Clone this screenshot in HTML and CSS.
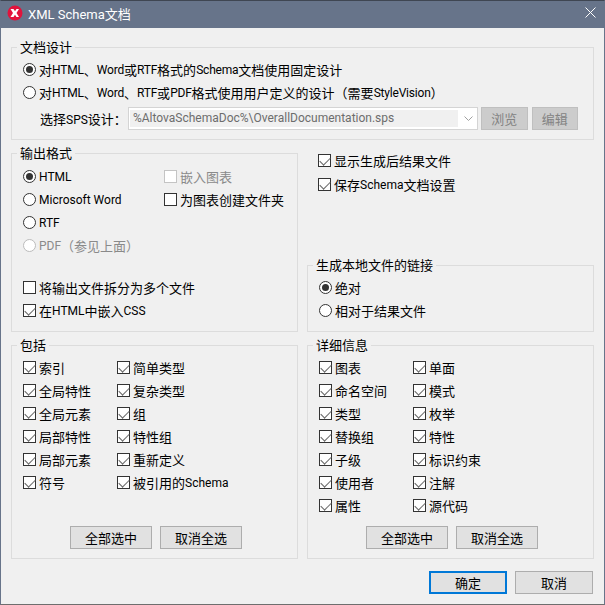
FILE: index.html
```html
<!DOCTYPE html>
<html lang="zh-CN">
<head>
  <meta charset="UTF-8" />
  <title>XML Schema文档</title>
  <link rel="stylesheet" href="styles.css">
</head>

<body>
  <div class="dialog">
    <header class="titlebar">
      <svg class="app-icon" width="16" height="16" viewBox="0 0 16 16">
        <circle cx="8" cy="8" r="7.5" fill="#e2133c"/>
        <path d="M3.500 4h3l1.500 2.200 1.500-2.200h2.500l-2.500 4 2.500 4h-2.500l-1.500-2.200-1.500 2.200h-3l2.500-4z" fill="#fff"/>
      </svg>
      <span class="title"><i>XML Schema</i>文档</span>
      <svg class="close" width="11" height="11" viewBox="0 0 11 11">
        <path d="M.5.5l10 10M10.500.5l-10 10" stroke="#fff" stroke-width="1" fill="none"/>
      </svg>
    </header>

    <main class="content">
      <fieldset class="group design">
        <legend>文档设计</legend>
        <div class="row"><span class="radio on"></span>对<i>HTML</i>、<i>Word</i>或<i>RTF</i>格式的<i>Schema</i>文档使用固定设计</div>
        <div class="row"><span class="radio"></span>对<i>HTML</i>、<i>Word</i>、<i>RTF</i>或<i>PDF</i>格式使用用户定义的设计（需要<i>StyleVision</i>）</div>
        <div class="sps">
          <label>选择<i>SPS</i>设计：</label>
          <div class="combo">
            <span class="combo-text">%AltovaSchemaDoc%\OverallDocumentation.sps</span>
            <svg width="9" height="6" viewBox="0 0 9 6"><path d="M.5.5l4 4 4-4" stroke="#a0a0a0" fill="none"/></svg>
          </div>
          <button class="btn small" disabled>浏览</button>
          <button class="btn small" disabled>编辑</button>
        </div>
      </fieldset>

      <div class="columns">
        <fieldset class="group output">
          <legend>输出格式</legend>
          <div class="format-grid">
            <div class="row"><span class="radio on"></span><i>HTML</i></div>
            <div class="row off"><span class="check"></span>嵌入图表</div>
            <div class="row"><span class="radio"></span><i>Microsoft Word</i></div>
            <div class="row"><span class="check"></span>为图表创建文件夹</div>
            <div class="row"><span class="radio"></span><i>RTF</i></div>
            <div></div>
            <div class="row off"><span class="radio"></span><i>PDF</i>（参见上面）</div>
          </div>
          <div class="split">
            <div class="row"><span class="check"></span>将输出文件拆分为多个文件</div>
            <div class="row"><span class="check on"></span>在<i>HTML</i>中嵌入<i>CSS</i></div>
          </div>
        </fieldset>

        <div class="side">
          <div class="result">
            <div class="row"><span class="check on"></span>显示生成后结果文件</div>
            <div class="row"><span class="check on"></span>保存<i>Schema</i>文档设置</div>
          </div>
          <fieldset class="group link">
            <legend>生成本地文件的链接</legend>
            <div class="row"><span class="radio on"></span>绝对</div>
            <div class="row"><span class="radio"></span>相对于结果文件</div>
          </fieldset>
        </div>

        <fieldset class="group list">
          <legend>包括</legend>
          <div class="two-col">
            <div class="row"><span class="check on"></span>索引</div>
            <div class="row"><span class="check on"></span>简单类型</div>
            <div class="row"><span class="check on"></span>全局特性</div>
            <div class="row"><span class="check on"></span>复杂类型</div>
            <div class="row"><span class="check on"></span>全局元素</div>
            <div class="row"><span class="check on"></span>组</div>
            <div class="row"><span class="check on"></span>局部特性</div>
            <div class="row"><span class="check on"></span>特性组</div>
            <div class="row"><span class="check on"></span>局部元素</div>
            <div class="row"><span class="check on"></span>重新定义</div>
            <div class="row"><span class="check on"></span>符号</div>
            <div class="row"><span class="check on"></span>被引用的<i>Schema</i></div>
          </div>
          <div class="select-btns">
            <button class="btn">全部选中</button>
            <button class="btn">取消全选</button>
          </div>
        </fieldset>

        <fieldset class="group list">
          <legend>详细信息</legend>
          <div class="two-col">
            <div class="row"><span class="check on"></span>图表</div>
            <div class="row"><span class="check on"></span>单面</div>
            <div class="row"><span class="check on"></span>命名空间</div>
            <div class="row"><span class="check on"></span>模式</div>
            <div class="row"><span class="check on"></span>类型</div>
            <div class="row"><span class="check on"></span>枚举</div>
            <div class="row"><span class="check on"></span>替换组</div>
            <div class="row"><span class="check on"></span>特性</div>
            <div class="row"><span class="check on"></span>子级</div>
            <div class="row"><span class="check on"></span>标识约束</div>
            <div class="row"><span class="check on"></span>使用者</div>
            <div class="row"><span class="check on"></span>注解</div>
            <div class="row"><span class="check on"></span>属性</div>
            <div class="row"><span class="check on"></span>源代码</div>
          </div>
          <div class="select-btns">
            <button class="btn">全部选中</button>
            <button class="btn">取消全选</button>
          </div>
        </fieldset>
      </div>

      <footer class="actions">
        <button class="btn action default">确定</button>
        <button class="btn action">取消</button>
      </footer>
    </main>
  </div>
</body>
</html>
```

FILE: styles.css
```css
* {
  box-sizing: border-box;
}

html, body {
  margin: 0;
  padding: 0;
}

body {
  width: 605px;
  height: 605px;
  overflow: hidden;
  font-family: "Noto Sans CJK SC", sans-serif;
  font-size: 13px;
  color: #000;
}

/* latin runs are a size smaller than the chinese around them */
i {
  font-family: Roboto, sans-serif;
  font-style: normal;
  font-size: 12px;
}

.dialog {
  width: 605px;
  height: 605px;
  background-color: #f0f0f0;
  border: 1px solid #67748a;
  border-top-color: #3f4652;
  border-bottom-color: #6e6e6e;
  display: flex;
  flex-direction: column;
}

.titlebar {
  height: 27px;
  flex: none;
  background-color: #67748a;
  color: #fff;
  display: flex;
  align-items: center;
  padding: 0 8px 3px 6px;
}

.app-icon {
  flex: none;
}

.title {
  margin-left: 5px;
  font-size: 13px;
  flex: 1;
}

.title i {
  font-size: 13px;
}

.close {
  margin-bottom: 2px;
}

.content {
  padding: 12px 10px 0;
}

.group {
  margin: 0;
  padding: 0;
  border: 1px solid #dcdcdc;
  min-width: 0;
}

.group legend {
  margin-left: -6px;
  padding: 0 3px;
  line-height: 14px;
  height: 14px;
}

.row {
  display: flex;
  align-items: center;
  height: 23px;
  white-space: nowrap;
}

.off {
  color: #8a8a8a;
}

.radio {
  width: 13px;
  height: 13px;
  border: 1px solid #333;
  border-radius: 50%;
  background-color: #fff;
  margin-right: 3px;
  flex: none;
  position: relative;
}

.radio.on::after {
  content: "";
  position: absolute;
  left: 2px;
  top: 2px;
  width: 7px;
  height: 7px;
  border-radius: 50%;
  background-color: #333;
}

.off .radio {
  border-color: #bcbcbc;
}

.check {
  width: 13px;
  height: 13px;
  border: 1px solid #333;
  background-color: #fff;
  margin-right: 3px;
  flex: none;
  position: relative;
}

.check.on::after {
  content: "";
  position: absolute;
  left: 3px;
  top: 0;
  width: 5px;
  height: 9px;
  border: solid #666;
  border-width: 0 1.5px 1.5px 0;
  transform: rotate(45deg);
}

.off .check {
  border-color: #c4c4c4;
}

.design {
  height: 100px;
  padding: 4px 11px 0;
}

.design .row i {
  letter-spacing: -0.2px;
}

.sps {
  display: flex;
  align-items: center;
  height: 23px;
  margin-top: 3px;
  padding-left: 17px;
}

.sps label {
  width: 88px;
  flex: none;
  white-space: nowrap;
}

.combo {
  width: 350px;
  height: 23px;
  flex: none;
  background-color: #fff;
  border: 1px solid #d4d4d4;
  display: flex;
  align-items: center;
  padding: 2px 4px 2px 1px;
  margin-right: 3px;
}

.combo svg {
  margin-left: 6px;
  flex: none;
}

.combo-text {
  flex: 1;
  height: 100%;
  background-color: #f0f0f0;
  color: #6d6d6d;
  font-family: Roboto, sans-serif;
  font-size: 12px;
  line-height: 17px;
  padding-left: 3px;
  white-space: nowrap;
}

.btn {
  font-family: inherit;
  font-size: 13px;
  color: #000;
  background-color: #e1e1e1;
  border: 1px solid #adadad;
  padding: 0;
}

.btn:disabled {
  background-color: #cccccc;
  border-color: #bfbfbf;
  color: #838383;
}

.btn.small {
  width: 48px;
  height: 23px;
  margin-right: 4px;
}

.columns {
  display: grid;
  grid-template-columns: 287px 287px;
  grid-template-rows: 186px 221px;
  column-gap: 9px;
  row-gap: 6px;
  margin-top: 6px;
}

.output {
  padding: 5px 11px 0;
}

.format-grid {
  display: grid;
  grid-template-columns: 141px 1fr;
}

.split {
  margin-top: 19px;
}

.side {
  display: flex;
  flex-direction: column;
  justify-content: space-between;
}

.result {
  padding-left: 11px;
  margin-top: 3px;
}

.result .row + .row {
  margin-top: 1px;
}

.link {
  height: 74px;
  padding: 4px 11px 0;
}

.list {
  padding: 4px 11px 0;
  position: relative;
}

.two-col {
  display: grid;
  grid-template-columns: 94px 1fr;
}

.select-btns {
  position: absolute;
  bottom: 9px;
  left: 58px;
  display: flex;
  gap: 8px;
}

.select-btns .btn {
  width: 82px;
  height: 23px;
}

.actions {
  display: flex;
  justify-content: flex-end;
  gap: 8px;
  margin-top: 12px;
  padding-right: 1px;
}

.btn.action {
  width: 78px;
  height: 23px;
}

.btn.default {
  border: 2px solid #0078d7;
}
```
